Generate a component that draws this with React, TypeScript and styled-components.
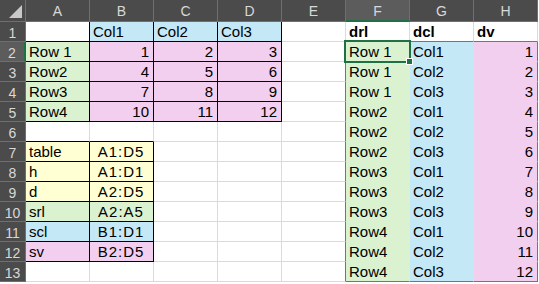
import React from "react";
import styled, { createGlobalStyle, css } from "styled-components";

type Fill = "green" | "blue" | "pink" | "yellow";
type Align = "left" | "right" | "center";

interface CellDef {
  v?: string;
  fill?: Fill;
  align?: Align;
  bold?: boolean;
}

const FILLS: Record<Fill, string> = {
  green: "#daf2d0",
  blue: "#c5e8f7",
  pink: "#f2ceef",
  yellow: "#ffffd3",
};

const GRID = "#dadada";
const INK = "#000000";
const SPILL = "#4a7acb";
const SELECT = "#1f7145";

const COLS = ["A", "B", "C", "D", "E", "F", "G", "H"];
const ROW_COUNT = 13;

const GlobalStyle = createGlobalStyle`
  html, body {
    margin: 0;
    padding: 0;
    background: #ffffff;
    overflow: hidden;
  }
`;

/* ------------------- sheet contents ------------------- */
function buildCells(): CellDef[][] {
  const rows: CellDef[][] = Array.from({ length: ROW_COUNT + 1 }, () =>
    COLS.map(() => ({}))
  );

  // source table A1:D5
  ["Col1", "Col2", "Col3"].forEach((h, i) => {
    rows[1][i + 1] = { v: h, fill: "blue" };
  });
  ["Row 1", "Row2", "Row3", "Row4"].forEach((label, r) => {
    rows[r + 2][0] = { v: label, fill: "green" };
    for (let c = 0; c < 3; c++) {
      rows[r + 2][c + 1] = { v: String(r * 3 + c + 1), fill: "pink", align: "right" };
    }
  });

  // named ranges A7:B12
  const names: [string, string, Fill][] = [
    ["table", "A1:D5", "yellow"],
    ["h", "A1:D1", "yellow"],
    ["d", "A2:D5", "yellow"],
    ["srl", "A2:A5", "green"],
    ["scl", "B1:D1", "blue"],
    ["sv", "B2:D5", "pink"],
  ];
  names.forEach(([name, ref, fill], i) => {
    rows[i + 7][0] = { v: name, fill };
    rows[i + 7][1] = { v: ref, fill, align: "center" };
  });

  // unpivoted spill F1:H13
  rows[1][5] = { v: "drl", bold: true };
  rows[1][6] = { v: "dcl", bold: true };
  rows[1][7] = { v: "dv", bold: true };
  const labels = ["Row 1", "Row2", "Row3", "Row4"];
  for (let i = 0; i < 12; i++) {
    rows[i + 2][5] = { v: labels[Math.floor(i / 3)], fill: "green" };
    rows[i + 2][6] = { v: `Col${(i % 3) + 1}`, fill: "blue" };
    rows[i + 2][7] = { v: String(i + 1), fill: "pink", align: "right" };
  }
  return rows;
}

const inBox = (r: number, c: number, r1: number, c1: number, r2: number, c2: number) =>
  r >= r1 && r <= r2 && c >= c1 && c <= c2;

const boxed = (r: number, c: number) =>
  inBox(r, c, 1, 0, 5, 3) || inBox(r, c, 7, 0, 12, 1);

function edgeColors(r: number, c: number, fill?: Fill) {
  const plain = fill ? FILLS[fill] : GRID;
  let right = plain;
  let bottom = plain;

  if (boxed(r, c) || boxed(r, c + 1)) right = INK;
  else if (r >= 2 && r <= 13 && (c === 4 || c === 7)) right = SPILL;

  if (boxed(r, c) || boxed(r + 1, c)) bottom = INK;
  else if (c >= 5 && c <= 7 && (r === 1 || r === 13)) bottom = SPILL;

  return { right, bottom };
}

const cells = buildCells();

const App: React.FC = () => {
  return (
    <>
      <GlobalStyle />
      <Sheet>
        <Corner>
          <CornerMark />
        </Corner>
        {COLS.map((col) => (
          <ColHead key={col} $active={col === "F"}>
            {col}
          </ColHead>
        ))}

        {cells.slice(1).map((row, i) => {
          const r = i + 1;
          return (
            <React.Fragment key={r}>
              <RowHead $active={r === 2}>{r}</RowHead>
              {row.map((cell, c) => {
                const edge = edgeColors(r, c, cell.fill);
                return (
                  <Cell
                    key={c}
                    $fill={cell.fill}
                    $align={cell.align ?? "left"}
                    $bold={cell.bold}
                    $right={edge.right}
                    $bottom={edge.bottom}
                    $spaced={c === 1 && r >= 7 && r <= 12}
                  >
                    {cell.v}
                    {r === 2 && c === 5 && (
                      <Selection>
                        <Handle />
                      </Selection>
                    )}
                  </Cell>
                );
              })}
            </React.Fragment>
          );
        })}
      </Sheet>
    </>
  );
};

export default App;

/* ------------------- Styled Components ------------------- */
const Sheet = styled.div`
  display: grid;
  grid-template-columns: 26px repeat(8, 64px);
  grid-template-rows: 22px repeat(${ROW_COUNT}, 20px);
  width: 539px;
  height: 284px;
  overflow: hidden;
  font-family: "Liberation Sans Narrow", "Liberation Sans", Arial, sans-serif;
`;

const headBase = css`
  box-sizing: border-box;
  background: #4b4b4b;
  color: #d8d8d8;
  font-family: "Liberation Sans", Arial, sans-serif;
  font-size: 14px;
  display: flex;
  align-items: center;
  justify-content: center;
`;

const Corner = styled.div`
  ${headBase};
  align-items: flex-end;
  justify-content: flex-end;
  padding: 0 3px 3px 0;
  border-right: 1px solid #6f6f6f;
  border-bottom: 1px solid #6f6f6f;
`;

const CornerMark = styled.div`
  width: 0;
  height: 0;
  border-left: 13px solid transparent;
  border-bottom: 13px solid #c9c9c9;
`;

const ColHead = styled.div<{ $active?: boolean }>`
  ${headBase};
  padding-top: 1px;
  border-right: 1px solid #6f6f6f;
  border-bottom: ${(p) => (p.$active ? `2px solid ${SELECT}` : "1px solid #6f6f6f")};
  background: ${(p) => (p.$active ? "#5c5c5c" : "#4b4b4b")};
`;

const RowHead = styled.div<{ $active?: boolean }>`
  ${headBase};
  padding-top: 2px;
  border-bottom: 1px solid #6f6f6f;
  border-right: ${(p) => (p.$active ? `2px solid ${SELECT}` : "1px solid #6f6f6f")};
  background: ${(p) => (p.$active ? "#5c5c5c" : "#4b4b4b")};
`;

const Cell = styled.div<{
  $fill?: Fill;
  $align: Align;
  $bold?: boolean;
  $right: string;
  $bottom: string;
  $spaced?: boolean;
}>`
  position: relative;
  box-sizing: border-box;
  display: flex;
  align-items: flex-end;
  justify-content: ${(p) =>
    p.$align === "right" ? "flex-end" : p.$align === "center" ? "center" : "flex-start"};
  padding: 0 4px 1px 3px;
  background: ${(p) => (p.$fill ? FILLS[p.$fill] : "#ffffff")};
  border-right: 1px solid ${(p) => p.$right};
  border-bottom: 1px solid ${(p) => p.$bottom};
  color: #000;
  font-size: 15px;
  line-height: 17px;
  font-weight: ${(p) => (p.$bold ? 700 : 400)};
  letter-spacing: ${(p) => (p.$spaced ? "1px" : "0")};
  white-space: nowrap;
`;

/* selected cell outline with its fill handle, drawn over the grid */
const Selection = styled.div`
  position: absolute;
  z-index: 2;
  left: -2px;
  top: -2px;
  right: -2px;
  bottom: -2px;
  border: 2px solid ${SELECT};
  pointer-events: none;
`;

const Handle = styled.div`
  position: absolute;
  right: -4px;
  bottom: -4px;
  width: 5px;
  height: 5px;
  background: ${SELECT};
  border: 1px solid #ffffff;
`;
